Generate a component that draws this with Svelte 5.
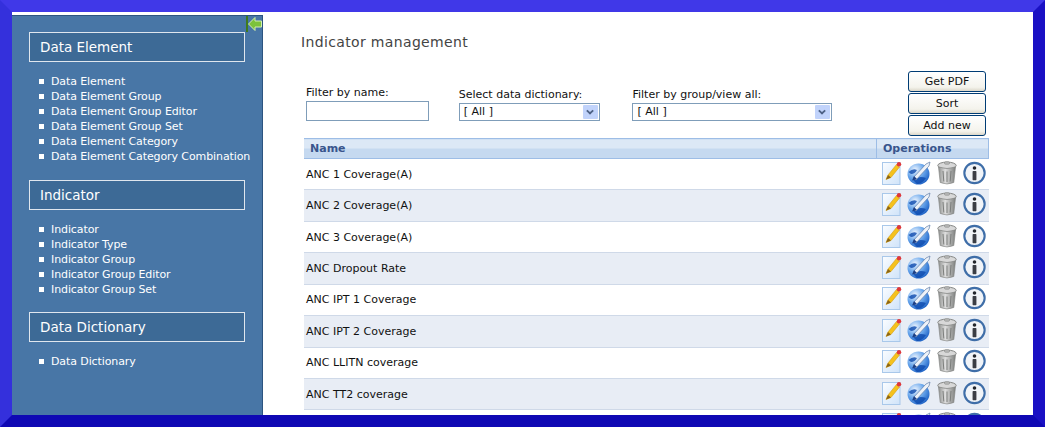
<script>
  const menus = [
    {
      title: 'Data Element',
      links: [
        'Data Element',
        'Data Element Group',
        'Data Element Group Editor',
        'Data Element Group Set',
        'Data Element Category',
        'Data Element Category Combination'
      ]
    },
    {
      title: 'Indicator',
      links: ['Indicator', 'Indicator Type', 'Indicator Group', 'Indicator Group Editor', 'Indicator Group Set']
    },
    { title: 'Data Dictionary', links: ['Data Dictionary'] }
  ];

  const indicators = [
    'ANC 1 Coverage(A)',
    'ANC 2 Coverage(A)',
    'ANC 3 Coverage(A)',
    'ANC Dropout Rate',
    'ANC IPT 1 Coverage',
    'ANC IPT 2 Coverage',
    'ANC LLITN coverage',
    'ANC TT2 coverage',
    ''
  ];
</script>

<svg class="defs" width="0" height="0" aria-hidden="true">
  <defs>
    <radialGradient id="globe" cx="0.35" cy="0.3" r="0.8">
      <stop offset="0" stop-color="#eef5fe" />
      <stop offset="0.5" stop-color="#6aa7ec" />
      <stop offset="1" stop-color="#1459c0" />
    </radialGradient>
    <linearGradient id="bin" x1="0" y1="0" x2="1" y2="0">
      <stop offset="0" stop-color="#8f918f" />
      <stop offset="0.4" stop-color="#dedede" />
      <stop offset="1" stop-color="#7d7f7d" />
    </linearGradient>
    <linearGradient id="sheet" x1="0" y1="0" x2="1" y2="1">
      <stop offset="0" stop-color="#fbfdff" />
      <stop offset="1" stop-color="#cfe3f9" />
    </linearGradient>
    <symbol id="ic-edit" viewBox="0 0 20 24">
      <rect x="0.5" y="1.5" width="17.5" height="22" fill="url(#sheet)" stroke="#a9c8ea" />
      <path d="M4 18.5 L6 14 L14.5 3.5 L17.5 6 L9 16.5 Z" fill="#f5c21c" stroke="#d39a12" stroke-width="0.6" />
      <path d="M4 18.5 L6 14 L9 16.5 Z" fill="#8a6518" />
      <circle cx="17" cy="3.2" r="2.2" fill="#e0383a" />
    </symbol>
    <symbol id="ic-web" viewBox="0 0 24 24">
      <ellipse cx="11.5" cy="13" rx="11" ry="10.6" fill="url(#globe)" />
      <path d="M1.5 11 Q6 7 10 9 Q8 13 4 13 Z M6 19 Q12 14 19 17 Q15 23 10 23 Z" fill="#0d4aae" opacity="0.8" />
      <path d="M6 17 L19 3 L23 1 L22 5 L9 19 Z" fill="#eef2f8" stroke="#5f7ca8" stroke-width="0.7" />
      <path d="M5 19.5 L7 15 L10 18 Z" fill="#1c3f86" />
    </symbol>
    <symbol id="ic-trash" viewBox="0 0 20 24">
      <ellipse cx="10" cy="4.5" rx="9.2" ry="3.4" fill="#d8d8d8" stroke="#858785" />
      <rect x="7.5" y="0.8" width="5" height="2.4" rx="1" fill="#bbbbbb" stroke="#858785" stroke-width="0.6" />
      <path d="M1.5 6 L3.2 21.5 Q10 24.5 16.8 21.5 L18.5 6 Q10 9 1.5 6 Z" fill="url(#bin)" stroke="#7f817f" stroke-width="0.6" />
      <path d="M6 10 L6.8 20.5 M10 10.5 L10 21 M14 10 L13.2 20.5" stroke="#7c7e7c" stroke-width="1" />
    </symbol>
    <symbol id="ic-info" viewBox="0 0 24 24">
      <circle cx="12" cy="12" r="10.6" fill="#f1f4f8" stroke="#3f6ea8" stroke-width="2.2" />
      <circle cx="12" cy="6.8" r="1.9" fill="#23262c" />
      <rect x="10" y="10" width="4" height="9.5" rx="0.6" fill="#3a3d44" />
    </symbol>
  </defs>
</svg>

<div class="frame">
  <aside class="sidebar">
    <button class="collapse" aria-label="Hide menu">
      <svg width="16" height="16" viewBox="0 0 16 16">
        <rect x="0" y="0" width="2" height="16" fill="#3f7a1c" />
        <path d="M2.5 8 L9 1.5 V5 H15.5 V11 H9 V14.5 Z" fill="#7cc23c" stroke="#d4efb0" stroke-width="1" />
      </svg>
    </button>
    {#each menus as menu}
      <h2>{menu.title}</h2>
      <ul>
        {#each menu.links as link}
          <li>{link}</li>
        {/each}
      </ul>
    {/each}
  </aside>

  <main class="content">
    <h1>Indicator management</h1>

    <div class="toolbar">
      <label class="name-filter">
        Filter by name:
        <input type="text" />
      </label>
      <label class="dict-filter">
        Select data dictionary:
        <span class="select"><span>[ All ]</span><i class="caret"></i></span>
      </label>
      <label class="group-filter">
        Filter by group/view all:
        <span class="select"><span>[ All ]</span><i class="caret"></i></span>
      </label>
      <div class="actions">
        <button>Get PDF</button>
        <button>Sort</button>
        <button>Add new</button>
      </div>
    </div>

    <table>
      <thead>
        <tr>
          <th>Name</th>
          <th class="ops">Operations</th>
        </tr>
      </thead>
      <tbody>
        {#each indicators as name}
          <tr>
            <td>{name}</td>
            <td class="ops">
              <div class="icons">
                <svg width="20" height="24"><use href="#ic-edit" /></svg>
                <svg width="24" height="24"><use href="#ic-web" /></svg>
                <svg class="trash" width="20" height="24"><use href="#ic-trash" /></svg>
                <svg width="23" height="24"><use href="#ic-info" /></svg>
              </div>
            </td>
          </tr>
        {/each}
      </tbody>
    </table>
  </main>
</div>

<style>
  :global(body) {
    margin: 0;
    overflow: hidden;
    font-family: 'DejaVu Sans', Verdana, sans-serif;
    font-size: 11px;
  }

  .defs {
    position: absolute;
  }

  .frame {
    box-sizing: border-box;
    height: 427px;
    width: 1045px;
    border: 12px solid;
    border-color: #4038e8 #1a10c4 #0f08b4 #3430dc;
    padding-top: 3px;
    background: #fff;
    display: flex;
    overflow: hidden;
  }

  .sidebar {
    position: relative;
    box-sizing: border-box;
    flex: 0 0 251px;
    min-width: 0;
    background: #4876a6;
    border-right: 1px solid #2c5480;
    border-top: 1px solid #2c5480;
    padding: 16px 0 0 17px;
    color: #fff;
  }

  .collapse {
    position: absolute;
    top: 0;
    right: 0;
    width: 16px;
    height: 16px;
    padding: 0;
    border: 0;
    background: none;
  }

  .sidebar h2 {
    box-sizing: border-box;
    width: 216px;
    height: 30px;
    margin: 0;
    padding-left: 10px;
    border: 1px solid #dfe6ee;
    background: #3d6a96;
    font-size: 13.5px;
    font-weight: normal;
    line-height: 28px;
  }

  .sidebar ul {
    list-style: none;
    margin: 12px 0 16px;
    padding: 0 0 0 10px;
  }

  .sidebar ul:nth-of-type(2) {
    margin-bottom: 15px;
  }

  .sidebar li {
    display: flex;
    align-items: center;
    gap: 7px;
    height: 15px;
    line-height: 15px;
    white-space: nowrap;
    letter-spacing: -0.1px;
  }

  .sidebar li::before {
    content: '';
    flex: none;
    width: 5px;
    height: 5px;
    background: #fff;
  }

  .content {
    flex: 1;
    padding: 0 44px 0 38px;
    min-width: 0;
    color: #111;
  }

  h1 {
    margin: 18px 0 0;
    font-size: 14px;
    font-weight: normal;
    line-height: 18px;
    letter-spacing: 0.35px;
    color: #444;
  }

  .toolbar {
    display: flex;
    align-items: flex-end;
    margin: 3px 0 2px 4px;
    height: 82px;
  }

  .toolbar label {
    display: flex;
    flex-direction: column;
    gap: 1px;
    line-height: 14px;
    padding-bottom: 15px;
  }

  .name-filter {
    width: 153px;
    margin-left: 1px;
    padding-bottom: 15px !important;
  }

  .dict-filter {
    width: 174px;
  }

  .group-filter {
    width: 276px;
  }

  .name-filter input {
    box-sizing: border-box;
    width: 123px;
    height: 20px;
    border: 1px solid #7f9db9;
    margin: 0;
    padding: 0;
  }

  .select {
    box-sizing: border-box;
    height: 18px;
    border: 1px solid #7f9db9;
    display: flex;
    align-items: center;
    justify-content: space-between;
    padding: 0 1px 0 4px;
    width: 141px;
  }

  .group-filter .select {
    width: 200px;
  }

  .caret {
    position: relative;
    width: 15px;
    height: 14px;
    border-radius: 1px;
    background: #c1d3fb;
  }

  .caret::after {
    content: '';
    position: absolute;
    left: 4px;
    top: 3px;
    width: 4px;
    height: 4px;
    border: solid #4d6185;
    border-width: 0 2px 2px 0;
    transform: scale(0.9, 0.8) rotate(45deg);
  }

  .actions {
    margin-left: auto;
    margin-right: 3px;
    display: flex;
    flex-direction: column;
    gap: 1px;
  }

  .actions button {
    box-sizing: border-box;
    width: 78px;
    height: 21px;
    padding: 0;
    border: 1px solid #003c74;
    border-radius: 3px;
    background: linear-gradient(#fff, #f4f3ec 80%, #dcd8ca);
    font: inherit;
    color: #111;
  }

  table {
    width: 685px;
    margin-left: 3px;
    border-collapse: collapse;
    table-layout: fixed;
  }

  th {
    height: 20px;
    padding: 0 0 0 6px;
    box-sizing: border-box;
    text-align: left;
    color: #39558c;
    font-size: 11px;
    font-weight: bold;
    border: 1px solid #9dbde6;
    border-width: 1px 0;
    background: linear-gradient(#dce8f6 0 50%, #c5d9f0 50% 100%);
  }

  th.ops {
    border-left: 1px solid #9dbde6;
    border-right: 1px solid #9dbde6;
  }

  .ops {
    width: 112px;
  }

  td {
    box-sizing: border-box;
    height: 31.43px;
    padding: 0 0 0 2px;
    border-bottom: 1px solid #cfd9e8;
  }

  tbody tr:nth-child(even) td {
    background: #e8edf5;
  }

  .icons {
    display: flex;
    align-items: center;
    padding: 0 0 3px 3px;
    gap: 5px;
  }

  .icons svg {
    display: block;
  }

  .icons .trash {
    margin: 0 1px;
  }
</style>
